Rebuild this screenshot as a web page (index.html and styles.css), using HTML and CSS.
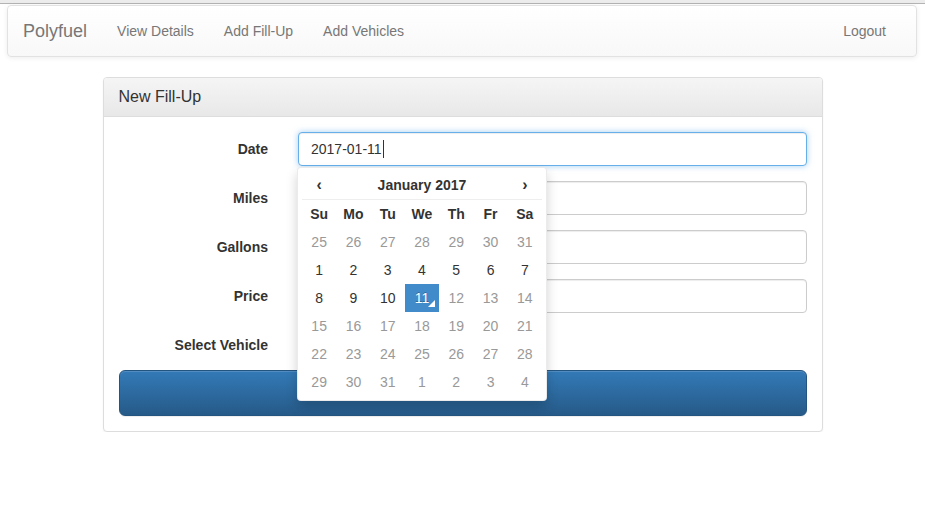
FILE: index.html
```html
<!DOCTYPE html>
<html lang="en">
<head>
<meta charset="utf-8">
<title>Polyfuel - New Fill-Up</title>
<link rel="stylesheet" href="styles.css">
</head>
<body>
<div class="chrome"></div>
<nav class="navbar">
  <div class="nav-left">
    <a class="brand" href="#">Polyfuel</a>
    <a class="nav-link" href="#">View Details</a>
    <a class="nav-link" href="#">Add Fill-Up</a>
    <a class="nav-link" href="#">Add Vehicles</a>
  </div>
  <div class="nav-right">
    <a class="nav-link" href="#">Logout</a>
  </div>
</nav>

<main class="container">
  <section class="panel">
    <div class="panel-heading">New Fill-Up</div>
    <div class="panel-body">
      <form class="form">
        <div class="form-group">
          <label class="control-label">Date</label>
          <div class="control date-control">
            <div class="form-control focused"><span>2017-01-11</span><span class="caret"></span></div>
            <div class="datepicker">
              <table class="dp-table">
                <thead>
                  <tr class="dp-head">
                    <th class="dp-arrow">‹</th>
                    <th colspan="5">January 2017</th>
                    <th class="dp-arrow">›</th>
                  </tr>
                  <tr class="dp-dow">
                    <th>Su</th><th>Mo</th><th>Tu</th><th>We</th><th>Th</th><th>Fr</th><th>Sa</th>
                  </tr>
                </thead>
                <tbody>
                  <tr><td class="off">25</td><td class="off">26</td><td class="off">27</td><td class="off">28</td><td class="off">29</td><td class="off">30</td><td class="off">31</td></tr>
                  <tr><td>1</td><td>2</td><td>3</td><td>4</td><td>5</td><td>6</td><td>7</td></tr>
                  <tr><td>8</td><td>9</td><td>10</td><td class="active">11</td><td class="off">12</td><td class="off">13</td><td class="off">14</td></tr>
                  <tr><td class="off">15</td><td class="off">16</td><td class="off">17</td><td class="off">18</td><td class="off">19</td><td class="off">20</td><td class="off">21</td></tr>
                  <tr><td class="off">22</td><td class="off">23</td><td class="off">24</td><td class="off">25</td><td class="off">26</td><td class="off">27</td><td class="off">28</td></tr>
                  <tr><td class="off">29</td><td class="off">30</td><td class="off">31</td><td class="off">1</td><td class="off">2</td><td class="off">3</td><td class="off">4</td></tr>
                </tbody>
              </table>
            </div>
          </div>
        </div>
        <div class="form-group">
          <label class="control-label">Miles</label>
          <div class="control"><input class="form-control" type="text"></div>
        </div>
        <div class="form-group">
          <label class="control-label">Gallons</label>
          <div class="control"><input class="form-control" type="text"></div>
        </div>
        <div class="form-group">
          <label class="control-label">Price</label>
          <div class="control"><input class="form-control" type="text"></div>
        </div>
        <div class="form-group">
          <label class="control-label">Select Vehicle</label>
          <div class="control"></div>
        </div>
        <button class="btn-primary" type="button" aria-label="Submit"></button>
      </form>
    </div>
  </section>
</main>
</body>
</html>
```
FILE: styles.css
```css
* { box-sizing: border-box; }

html, body {
  margin: 0;
  padding: 0;
  background: #fff;
}

body {
  font-family: "Liberation Sans", Arial, Helvetica, sans-serif;
  font-size: 14px;
  line-height: 20px;
  color: #333;
}

.chrome {
  height: 4px;
  background: #ececec;
  border-bottom: 1px solid #b4b4b4;
}

.navbar {
  display: flex;
  justify-content: space-between;
  align-items: stretch;
  height: 52px;
  margin: 1px 8px 20px 7px;
  border: 1px solid #e2e2e2;
  border-radius: 4px;
  background: linear-gradient(to bottom, #fff 0, #f8f8f8 100%);
  box-shadow: inset 0 1px 0 rgba(255,255,255,.15), 0 1px 5px rgba(0,0,0,.075);
}

.nav-left, .nav-right {
  display: flex;
  align-items: stretch;
}

.nav-right {
  padding-right: 15px;
}

.brand {
  display: flex;
  align-items: center;
  padding: 0 15px;
  font-size: 18px;
  color: #777;
  text-decoration: none;
}

.nav-link {
  display: flex;
  align-items: center;
  padding: 0 15px;
  color: #777;
  text-decoration: none;
}

.container {
  width: 750px;
  margin: 0 auto;
  padding: 0 15px;
}

.panel {
  border: 1px solid #ddd;
  border-radius: 4px;
  background: #fff;
  box-shadow: 0 1px 2px rgba(0,0,0,.05);
}

.panel-heading {
  padding: 10px 15px;
  font-size: 16px;
  line-height: 17.6px;
  color: #333;
  background: linear-gradient(to bottom, #f5f5f5 0, #e8e8e8 100%);
  border-bottom: 1px solid #ddd;
  border-radius: 3px 3px 0 0;
}

.panel-body {
  padding: 15px;
}

.form-group {
  display: flex;
  margin: 0 -15px 15px;
}

.control-label {
  width: 25%;
  padding: 7px 15px 0;
  text-align: right;
  font-weight: bold;
}

.control {
  width: 75%;
  padding: 0 15px;
}

.date-control {
  position: relative;
}

.form-control {
  display: block;
  width: 100%;
  height: 34px;
  padding: 6px 12px;
  font: inherit;
  color: #555;
  border: 1px solid #ccc;
  border-radius: 4px;
  background: #fff;
  box-shadow: inset 0 1px 1px rgba(0,0,0,.075);
}

.form-control.focused {
  display: flex;
  align-items: center;
  border-color: #66afe9;
  box-shadow: inset 0 1px 1px rgba(0,0,0,.075), 0 0 6px rgba(102,175,233,.6);
  color: #333;
}

.caret {
  display: inline-block;
  width: 1px;
  height: 18px;
  margin-left: 1px;
  background: #333;
}

.datepicker {
  position: absolute;
  top: 35px;
  left: 14px;
  z-index: 10;
  width: 250px;
  padding: 4px;
  background: #fff;
  border: 1px solid rgba(0,0,0,.08);
  border-radius: 4px;
  box-shadow: 0 6px 12px rgba(0,0,0,.175);
}

.dp-table {
  width: 100%;
  border-collapse: collapse;
  table-layout: fixed;
}

.dp-table th,
.dp-table td {
  height: 28px;
  padding: 0;
  text-align: center;
  vertical-align: middle;
}

.dp-head th {
  border-bottom: 1px solid #eee;
  font-weight: bold;
}

.dp-arrow {
  font-size: 16px;
}

.dp-dow th {
  font-weight: bold;
}

.dp-table td {
  color: #333;
}

.dp-table td.off {
  color: #999;
}

.dp-table td.active {
  position: relative;
  background: #428bca;
  color: #fff;
  text-shadow: 0 -1px 0 rgba(0,0,0,.25);
}

.dp-table td.active::before {
  content: "";
  position: absolute;
  right: 4px;
  bottom: 5px;
  border-style: solid;
  border-color: transparent;
  border-width: 0 0 7px 7px;
  border-bottom-color: #fff;
}

.btn-primary {
  display: block;
  width: 100%;
  height: 46px;
  padding: 10px 16px;
  font: inherit;
  font-size: 18px;
  line-height: 24px;
  color: #fff;
  background: linear-gradient(to bottom, #337ab7 0, #265a88 100%);
  border: 1px solid #245580;
  border-radius: 6px;
  box-shadow: inset 0 1px 0 rgba(255,255,255,.15), 0 1px 1px rgba(0,0,0,.075);
  text-shadow: 0 -1px 0 rgba(0,0,0,.2);
}
```
